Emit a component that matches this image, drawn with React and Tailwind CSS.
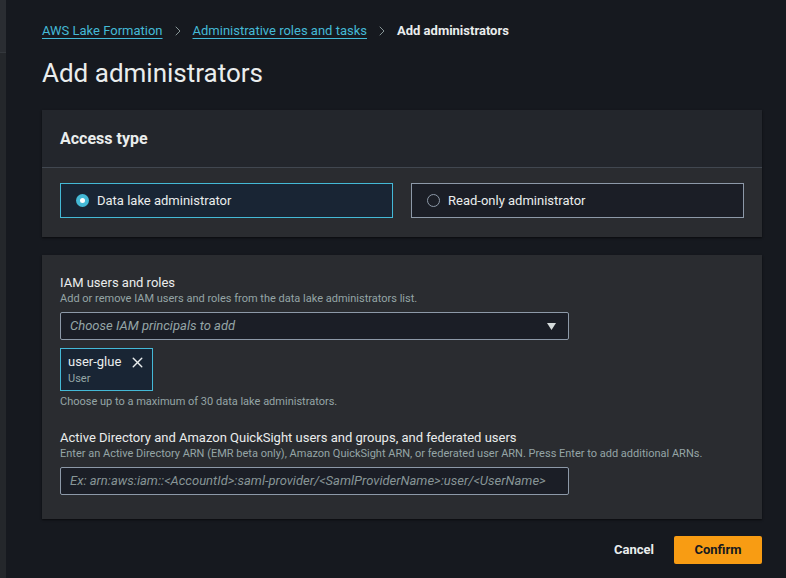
import React, { useState } from 'react';
import { ChevronRight, X } from 'lucide-react';

const Radio = ({ checked }) =>
    checked ? (
        <span className="w-[13px] h-[13px] rounded-full bg-[#44b9d6] flex items-center justify-center shrink-0">
            <span className="w-[5px] h-[5px] rounded-full bg-white"></span>
        </span>
    ) : (
        <span className="w-[13px] h-[13px] rounded-full border-[1.5px] border-[#8d99a8] shrink-0"></span>
    );

const App = () => {
    const [access, setAccess] = useState('admin');

    return (
        <div className="flex min-h-[578px] bg-[#16191f] text-[#d5dbdb] font-['Roboto',sans-serif]">
            {/* Side strip */}
            <div className="w-[6px] shrink-0 flex flex-col bg-[#24272b]">
                <div className="h-[53px] bg-[#2a2d32] border-b border-[#33373c]"></div>
            </div>

            <div className="flex-1 pl-[36px] pr-[24px] pt-[21px]">
                {/* Breadcrumbs */}
                <nav className="flex items-center gap-[7px] text-[13px] leading-[20px]">
                    <a className="text-[#44b9d6] underline underline-offset-[3px] decoration-1">AWS Lake Formation</a>
                    <ChevronRight size={16} strokeWidth={1.5} className="text-[#879596]" />
                    <a className="text-[#44b9d6] underline underline-offset-[3px] decoration-1">Administrative roles and tasks</a>
                    <ChevronRight size={16} strokeWidth={1.5} className="text-[#879596]" />
                    <span className="font-bold text-[#eaeded]">Add administrators</span>
                </nav>

                {/* Title */}
                <h1 className="mt-[15px] text-[26px] leading-[34px] text-[#eaeded]">Add administrators</h1>

                {/* Access type panel */}
                <section className="mt-[20px] bg-[#2a2c30] shadow-[0_1px_2px_rgba(0,0,0,0.6)]">
                    <div className="h-[58px] px-[18px] flex items-center bg-[#23262c] border-b border-[#414750]">
                        <h2 className="text-[16px] font-bold text-[#eaeded]">Access type</h2>
                    </div>
                    <div className="grid grid-cols-2 gap-[18px] px-[18px] pt-[15px] pb-[19px]">
                        <button
                            onClick={() => setAccess('admin')}
                            className={`h-[35px] flex items-center gap-[8px] px-[15px] text-[13px] text-left ${access === 'admin' ? 'bg-[#192534] border border-[#44b9d6]' : 'bg-[#1b1e26] border border-[#8d99a8]'}`}
                        >
                            <Radio checked={access === 'admin'} />
                            <span className="text-[#eaeded]">Data lake administrator</span>
                        </button>
                        <button
                            onClick={() => setAccess('readonly')}
                            className={`h-[35px] flex items-center gap-[8px] px-[15px] text-[13px] text-left ${access === 'readonly' ? 'bg-[#192534] border border-[#44b9d6]' : 'bg-[#1b1e26] border border-[#8d99a8]'}`}
                        >
                            <Radio checked={access === 'readonly'} />
                            <span className="text-[#eaeded]">Read-only administrator</span>
                        </button>
                    </div>
                </section>

                {/* Principals panel */}
                <section className="mt-[18px] bg-[#2a2c30] shadow-[0_1px_2px_rgba(0,0,0,0.6)] px-[18px] pt-[19px] pb-[24px]">
                    <div className="text-[13px] leading-[17px] text-[#eaeded]">IAM users and roles</div>
                    <div className="text-[11px] leading-[16px] text-[#95a5a6]">Add or remove IAM users and roles from the data lake administrators list.</div>

                    <div className="mt-[5px] w-[509px] h-[28px] flex items-center justify-between pl-[9px] pr-[12px] bg-[#1b1e26] border border-[#8d99a8] rounded-[2px]">
                        <span className="italic text-[13px] text-[#95a5a6]">Choose IAM principals to add</span>
                        <svg width="9" height="7" viewBox="0 0 9 7">
                            <path d="M0 0 H9 L4.5 7 Z" fill="#d5dbdb" />
                        </svg>
                    </div>

                    <div className="mt-[8px] w-[93px] h-[43px] bg-[#192534] border border-[#44b9d6] pl-[7px] pr-[6px] pt-[4px]">
                        <div className="flex items-center justify-between">
                            <span className="text-[13px] leading-[18px] text-[#eaeded]">user-glue</span>
                            <X size={17} strokeWidth={2} className="text-[#eaeded]" />
                        </div>
                        <div className="text-[11px] leading-[16px] text-[#95a5a6]">User</div>
                    </div>

                    <div className="mt-[3px] text-[11px] leading-[16px] text-[#95a5a6]">Choose up to a maximum of 30 data lake administrators.</div>

                    <div className="mt-[19px] text-[13px] leading-[17px] text-[#eaeded]">Active Directory and Amazon QuickSight users and groups, and federated users</div>
                    <div className="text-[11px] leading-[16px] text-[#95a5a6]">Enter an Active Directory ARN (EMR beta only), Amazon QuickSight ARN, or federated user ARN. Press Enter to add additional ARNs.</div>

                    <div className="mt-[5px] w-[509px] h-[28px] flex items-center pl-[9px] bg-[#1b1e26] border border-[#8d99a8] rounded-[2px]">
                        <span className="italic text-[13px] text-[#879596]">Ex: arn:aws:iam::&lt;AccountId&gt;:saml-provider/&lt;SamlProviderName&gt;:user/&lt;UserName&gt;</span>
                    </div>
                </section>

                {/* Footer */}
                <div className="mt-[17px] flex items-center justify-end gap-[18px]">
                    <button className="text-[13px] font-bold text-[#eaeded] px-[2px]">Cancel</button>
                    <button className="w-[88px] h-[28px] rounded-[2px] bg-[#f89c13] text-[13px] font-bold text-[#16191f]">Confirm</button>
                </div>
            </div>
        </div>
    );
};

export default App;
